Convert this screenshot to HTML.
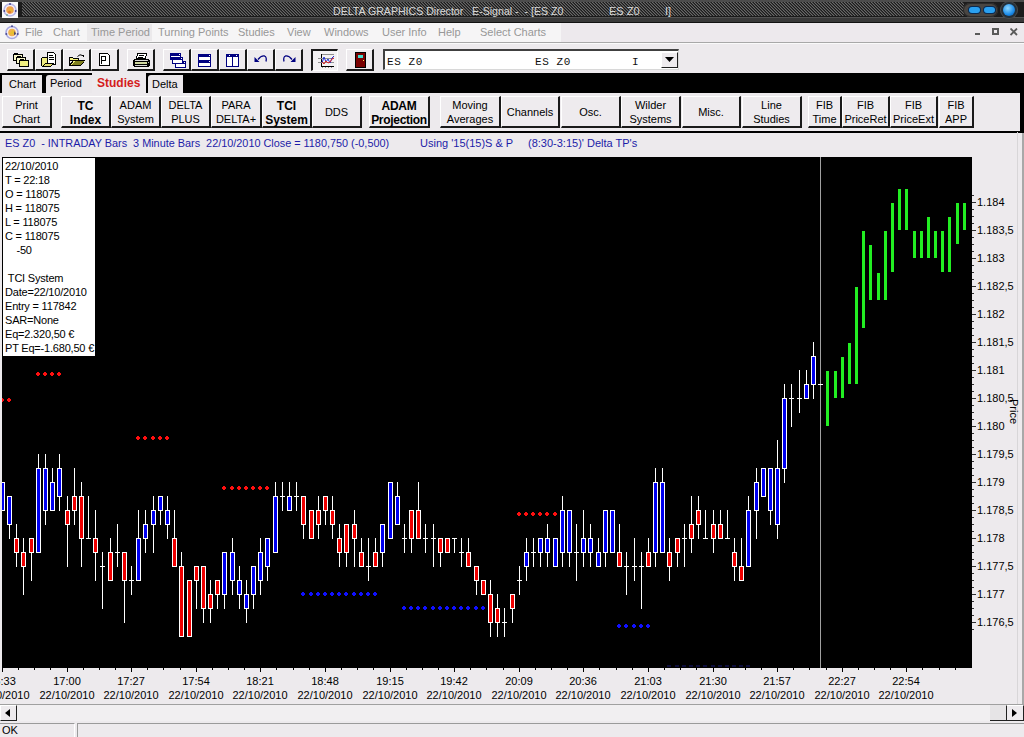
<!DOCTYPE html>
<html><head><meta charset="utf-8">
<style>
*{margin:0;padding:0;box-sizing:border-box}
html,body{width:1024px;height:737px;overflow:hidden;background:#edeaed;font-family:"Liberation Sans",sans-serif;font-size:11px;color:#000}
.a{position:absolute}
.t{position:absolute;white-space:nowrap;font-size:11px;line-height:14px}
.tc{width:80px;text-align:center}
.mi{position:absolute;top:25px;font-size:11px;line-height:14px;color:#989898;white-space:nowrap}
.tb{position:absolute;top:49px;height:22px;background:#eeebee;border-right:2px solid #1a1a1a;border-bottom:2px solid #1a1a1a;border-left:1px solid #fff;border-top:1px solid #fff}
.tab{position:absolute;top:75px;height:18px;background:#ebe8eb;font-size:11px;line-height:14px}
.btn{position:absolute;top:96px;height:32px;background:#eeebee;border-left:1px solid #fff;border-top:1px solid #fff;border-right:2px solid #1a1a1a;border-bottom:2px solid #1a1a1a;font-size:11px;line-height:14px;text-align:center;padding-top:1px}
.btn b{font-weight:bold;font-size:12px;line-height:14px;display:block;margin-top:1px}
.ib{position:absolute;left:3px;top:158px;width:92px;height:198px;background:#fff;padding:1px 0 0 2px;white-space:nowrap;overflow:hidden;letter-spacing:-0.2px;font-size:11px;line-height:14px}
</style></head><body>
<!-- TITLE BAR -->
<div class="a" style="left:0;top:0;width:1024px;height:23px;background:#1c1c1c"></div>
<div class="a" style="left:0;top:0;width:1024px;height:2px;background:#4c4c4c"></div>
<svg class="a" style="left:22px;top:2px" width="942" height="14" shape-rendering="crispEdges"><defs><pattern id="hp" width="3" height="3" patternUnits="userSpaceOnUse"><rect width="3" height="3" fill="#1c1c1c"/><rect x="0" y="0" width="1" height="1" fill="#686868"/><rect x="1" y="1" width="1" height="1" fill="#686868"/><rect x="2" y="2" width="1" height="1" fill="#686868"/><rect x="1" y="0" width="1" height="1" fill="#3c3c3c"/><rect x="2" y="1" width="1" height="1" fill="#3c3c3c"/><rect x="0" y="2" width="1" height="1" fill="#3c3c3c"/></pattern></defs><rect width="942" height="14" fill="url(#hp)"/></svg>
<div class="a" style="left:0;top:16px;width:1024px;height:1px;background:#1a1a1a"></div><div class="a" style="left:0;top:17px;width:1024px;height:5px;background:#393939;border-top:1px solid #525252"></div>
<div class="a" style="left:0;top:22px;width:1024px;height:1px;background:#111"></div>
<div class="a" style="left:2px;top:2px;width:16px;height:16px;background:#fafafa"></div>
<svg class="a" style="left:2px;top:2px" width="16" height="16"><circle cx="8" cy="8" r="6" fill="#f4ecf4" stroke="#b8b8e8" stroke-width="1.6"/><circle cx="8" cy="8" r="3.8" fill="#f0a050"/><path d="M5.5 10 L8.5 5.5 L11 9.5Z" fill="#e8b830"/><circle cx="7.5" cy="10" r="1.5" fill="#e07830"/><circle cx="8" cy="2" r="1" fill="#4a4a90"/><circle cx="2.3" cy="9" r="1" fill="#4a4a90"/><circle cx="13.7" cy="9" r="1" fill="#4a4a90"/><circle cx="5" cy="13" r="0.9" fill="#70a090"/></svg>
<div class="t" style="left:333px;top:4px;color:#d8d8d8;font-size:11px;transform:scaleX(0.963);transform-origin:0 0">DELTA GRAPHICS Director&nbsp;&nbsp; E-Signal -&nbsp; - [ES Z0</div>
<div class="t" style="left:609px;top:4px;color:#d8d8d8">ES Z0</div>
<div class="t" style="left:665px;top:4px;color:#d8d8d8">I]</div>
<div class="a" style="left:963px;top:3px;width:35px;height:14px;border-radius:7px;background:#4a4642;box-shadow:inset 0 0 0 1px #2a2a2a"></div>
<div class="a" style="left:969px;top:7px;width:11px;height:6px;border-radius:3px;background:#2aa0f0;box-shadow:0 0 0 1px #0a2a50"></div>
<div class="a" style="left:984px;top:7px;width:11px;height:6px;border-radius:3px;background:#2aa0f0;box-shadow:0 0 0 1px #0a2a50"></div>
<div class="a" style="left:1001px;top:2px;width:16px;height:16px;border-radius:8px;background:#24303a;box-shadow:0 0 0 1px #4a4a4a"></div>
<div class="a" style="left:1003px;top:4px;width:12px;height:12px;border-radius:6px;background:radial-gradient(circle at 40% 35%,#8fd8ff,#1a8ae8 60%,#0a4a90)"></div>

<!-- MENU BAR -->
<div class="a" style="left:0;top:23px;width:561px;height:20px;background:#f6f5f6"></div>
<div class="a" style="left:561px;top:23px;width:463px;height:20px;background:#ede9ed"></div>
<div class="a" style="left:87px;top:24px;width:65px;height:17px;background:#ebe9eb"></div>
<div class="a" style="left:0;top:42px;width:1024px;height:1px;background:#a8a8a8"></div>
<div class="a" style="left:0;top:43px;width:1024px;height:1px;background:#fafafa"></div>
<svg class="a" style="left:4px;top:24px" width="16" height="16"><circle cx="8" cy="8.5" r="6" fill="#f6f0f6" stroke="#a8a8e0" stroke-width="1.6"/><circle cx="8" cy="8.5" r="3.8" fill="#f0b050"/><path d="M5.5 10.5 L8.5 5.5 L11.5 10Z" fill="#e8c030"/><path d="M10.5 7 L12 10 L10 11z" fill="#303070"/><circle cx="8" cy="2.3" r="1" fill="#4a4a90"/><circle cx="2.3" cy="10" r="1" fill="#4a4a90"/><circle cx="13.7" cy="10" r="1" fill="#4a4a90"/></svg>
<div class="mi" style="left:25px">File</div>
<div class="mi" style="left:53px">Chart</div>
<div class="mi" style="left:91px">Time Period</div>
<div class="mi" style="left:158px">Turning Points</div>
<div class="mi" style="left:238px">Studies</div>
<div class="mi" style="left:287px">View</div>
<div class="mi" style="left:324px">Windows</div>
<div class="mi" style="left:382px">User Info</div>
<div class="mi" style="left:438px">Help</div>
<div class="mi" style="left:480px">Select Charts</div>
<div class="a" style="left:975px;top:33px;width:5px;height:2px;background:#5a5a5a"></div>
<div class="a" style="left:992px;top:28px;width:7px;height:7px;border:2px solid #5a5a5a"></div>
<svg class="a" style="left:1010px;top:28px" width="8" height="8"><path d="M0.5 0.5 L7 7 M7 0.5 L0.5 7" stroke="#5a5a5a" stroke-width="1.8"/></svg>

<!-- TOOLBAR -->
<div class="tb" style="left:7px;width:28px"></div>
<div class="tb" style="left:35px;width:28px"></div>
<div class="tb" style="left:63px;width:28px"></div>
<div class="tb" style="left:91px;width:28px"></div>
<div class="tb" style="left:127px;width:28px"></div>
<div class="tb" style="left:163px;width:28px"></div>
<div class="tb" style="left:191px;width:28px"></div>
<div class="tb" style="left:219px;width:28px"></div>
<div class="tb" style="left:247px;width:28px"></div>
<div class="tb" style="left:275px;width:28px"></div>
<div class="tb" style="left:311px;width:27px;border-left:2px solid #1a1a1a;border-top:2px solid #1a1a1a;border-right:1px solid #fff;border-bottom:1px solid #fff;background:#f4f2f4"></div>
<div class="tb" style="left:346px;width:28px"></div>
<!-- combo -->
<div class="a" style="left:383px;top:49px;width:296px;height:21px;background:#fff;border-top:2px solid #404040;border-left:2px solid #404040;border-bottom:1px solid #d8d8d8;border-right:1px solid #d8d8d8"></div>
<div class="t" style="left:387px;top:55px;font-family:'Liberation Mono',monospace;font-size:11px;letter-spacing:0.6px;line-height:14px;color:#101010">ES Z0</div>
<div class="t" style="left:535px;top:55px;font-family:'Liberation Mono',monospace;font-size:11px;letter-spacing:0.6px;line-height:14px;color:#101010">ES Z0</div>
<div class="t" style="left:632px;top:55px;font-family:'Liberation Mono',monospace;font-size:11px;letter-spacing:0.6px;line-height:14px;color:#101010">I</div>
<div class="a" style="left:661px;top:52px;width:17px;height:16px;background:#eeebee;border-left:1px solid #fff;border-top:1px solid #fff;border-right:1px solid #202020;border-bottom:1px solid #202020"></div>
<svg class="a" style="left:665px;top:57px" width="9" height="6"><path d="M0 0 H9 L4.5 5Z" fill="#000"/></svg>
<!--ICONS-->
<svg class="a" style="left:0;top:0" width="400" height="75" shape-rendering="crispEdges">
<!-- icon1 stacked folders -->
<rect x="13" y="54" width="10" height="7" fill="#000"/><rect x="14" y="53" width="4" height="1" fill="#000"/><rect x="14" y="55" width="8" height="5" fill="#f8f6c8"/>
<rect x="16" y="57" width="10" height="7" fill="#000"/><rect x="17" y="56" width="4" height="1" fill="#000"/><rect x="17" y="58" width="8" height="5" fill="#f8f6c8"/>
<rect x="19" y="60" width="10" height="7" fill="#000"/><rect x="20" y="59" width="4" height="1" fill="#000"/><rect x="20" y="61" width="8" height="5" fill="#f0ee80"/>
<!-- icon2 folder + doc -->
<path d="M47.5 52.5 h6 l2 2 v10 h-8z" fill="#fff" stroke="#000"/>
<rect x="49" y="55" width="4" height="1" fill="#000"/><rect x="49" y="57" width="5" height="1" fill="#000"/><rect x="49" y="59" width="5" height="1" fill="#000"/>
<path d="M41.5 58.5 l1 -1 h5 v9 h-5 l-1 -1z" fill="#f0ec80" stroke="#000"/>
<path d="M42.5 66.5 l3 -3 h8 l-3 3z" fill="#e8e070" stroke="#000"/>
<rect x="42" y="66" width="9" height="1" fill="#000"/>
<!-- icon3 open folder -->
<path d="M69.5 57.5 h3 l1 1 h5 v2 h-9z" fill="#f4f080" stroke="#000"/>
<path d="M69.5 58.5 v7 h11 l4 -5 h-11 l-4 5" fill="#f4f080" stroke="#000"/>
<path d="M71 65 l4 -4 h9 l-4 4z" fill="#808020"/>
<rect x="69" y="65" width="12" height="1" fill="#000"/>
<path d="M81 55 h3 v2z" fill="#000"/>
<path d="M77.5 56.5 q2.5 -3 5 -1" fill="none" stroke="#000" stroke-width="1" shape-rendering="auto"/>
<!-- icon4 doc P -->
<path d="M99.5 53.5 h8 l2 2 v10 h-10z" fill="#fff" stroke="#000"/>
<path d="M101 56 h5 v5 h-4 v3 h-1z M102 57 v3 h3 v-3z" fill="#000" fill-rule="evenodd"/>
<!-- printer -->
<path d="M137.5 53.5 h9 l-1 5 h-9z" fill="#fff" stroke="#000"/>
<rect x="139" y="55" width="5" height="1" fill="#000"/><rect x="138" y="57" width="5" height="1" fill="#000"/>
<rect x="134" y="59" width="15" height="8" fill="#000"/>
<rect x="133" y="60" width="17" height="6" fill="#000"/>
<rect x="135" y="60" width="12" height="1" fill="#d8d8d8"/>
<rect x="135" y="62" width="12" height="2" fill="#d0d8a0"/>
<rect x="135" y="65" width="12" height="1" fill="#d8d8d8"/>
<rect x="147" y="60" width="1" height="1" fill="#c0c0c0"/><rect x="148" y="62" width="1" height="1" fill="#c0c0c0"/>
<!-- cascade -->
<g fill="#000080">
<rect x="170" y="53" width="11" height="7"/>
<rect x="172" y="57" width="11" height="7"/>
<rect x="175" y="61" width="11" height="7"/>
</g>
<rect x="171" y="56" width="9" height="1" fill="#fff"/>
<rect x="173" y="60" width="9" height="3" fill="#fff"/>
<rect x="176" y="64" width="9" height="3" fill="#fff"/>
<rect x="179" y="54" width="1" height="1" fill="#fff"/><rect x="181" y="58" width="1" height="1" fill="#fff"/><rect x="184" y="62" width="1" height="1" fill="#fff"/>
<!-- tile horizontal -->
<rect x="198" y="54" width="13" height="13" fill="#000080"/>
<rect x="199" y="57" width="11" height="3" fill="#fff"/>
<rect x="199" y="63" width="11" height="3" fill="#fff"/>
<rect x="209" y="55" width="1" height="1" fill="#fff"/><rect x="209" y="61" width="1" height="1" fill="#fff"/>
<!-- tile vertical -->
<rect x="226" y="54" width="13" height="13" fill="#000080"/>
<rect x="227" y="57" width="5" height="9" fill="#fff"/>
<rect x="233" y="57" width="5" height="9" fill="#fff"/>
<rect x="229" y="55" width="1" height="1" fill="#fff"/><rect x="236" y="55" width="1" height="1" fill="#fff"/>
</svg>
<svg class="a" style="left:0;top:0" width="400" height="75">
<!-- undo -->
<path d="M258 59.5 q3 -4 6.5 -3.5 q2.5 1 1.5 5.5" fill="none" stroke="#000080" stroke-width="1.3"/>
<path d="M254.5 57 v5 h5z" fill="#000080"/>
<!-- redo -->
<path d="M292 59.5 q-3 -4 -6.5 -3.5 q-2.5 1 -1.5 5.5" fill="none" stroke="#000080" stroke-width="1.3"/>
<path d="M295.5 57 v5 h-5z" fill="#000080"/>
<!-- chart icon -->
<g shape-rendering="crispEdges">
<rect x="321" y="54" width="1" height="13" fill="#000"/>
<rect x="321" y="66" width="13" height="1" fill="#000"/>
<rect x="322" y="54" width="12" height="1" fill="#909090"/>
<rect x="318" y="58" width="16" height="1" fill="#909090"/>
<rect x="318" y="62" width="16" height="1" fill="#909090"/>
<rect x="322" y="67" width="1" height="1" fill="#909090"/><rect x="325" y="67" width="1" height="1" fill="#909090"/><rect x="328" y="67" width="1" height="1" fill="#909090"/><rect x="331" y="67" width="1" height="1" fill="#909090"/>
</g>
<path d="M322 63 l2 -6 l2 5 l2 -3 l2 4 l2 -5 l2 -2" fill="none" stroke="#2030d0" stroke-width="1"/>
<path d="M322 62 l2 2 l2 -3 l2 2 l2 -1 l2 -3 l2 -1" fill="none" stroke="#e02020" stroke-width="1"/>
<!-- door -->
<g shape-rendering="crispEdges">
<rect x="355" y="52" width="11" height="16" fill="#000"/>
<rect x="356" y="53" width="9" height="14" fill="#7a0000"/>
<rect x="358" y="55" width="5" height="3" fill="#40e0d0"/>
<rect x="363" y="60" width="1" height="1" fill="#ffe060"/>
</g>
</svg>

<!-- TABS -->
<div class="a" style="left:0;top:73px;width:1024px;height:20px;background:#000"></div>
<div class="tab" style="left:2px;width:40px"><span class="a" style="left:7px;top:2px">Chart</span></div>
<div class="tab" style="left:46px;width:46px;border-top-left-radius:3px"><span class="a" style="left:4px;top:1px">Period</span></div>
<div class="tab" style="left:92px;top:73px;height:22px;width:54px;background:#edeaed"><span class="a" style="left:5px;top:3px;color:#d41c1c;font-weight:bold;font-size:12px">Studies</span></div>
<div class="tab" style="left:148px;width:35px;border-top-left-radius:3px"><span class="a" style="left:4px;top:2px">Delta</span></div>

<!-- BUTTON PANEL -->
<div class="a" style="left:0;top:93px;width:1020px;height:38px;background:#edeaed"></div>
<div class="a" style="left:1020px;top:93px;width:4px;height:39px;background:#000"></div>
<div class="a" style="left:0;top:131px;width:1024px;height:2px;background:#000"></div>
<div class="btn" style="left:2px;width:50px">Print<br>Chart</div>
<div class="btn" style="left:61px;width:50px"><b>TC<br>Index</b></div>
<div class="btn" style="left:111px;width:50px">ADAM<br>System</div>
<div class="btn" style="left:161px;width:50px">DELTA<br>PLUS</div>
<div class="btn" style="left:211px;width:51px">PARA<br>DELTA+</div>
<div class="btn" style="left:262px;width:50px"><b>TCI<br>System</b></div>
<div class="btn" style="left:312px;width:50px;line-height:29px">DDS</div>
<div class="btn" style="left:369px;width:61px"><b style="letter-spacing:-0.3px">ADAM<br>Projection</b></div>
<div class="btn" style="left:440px;width:61px">Moving<br>Averages</div>
<div class="btn" style="left:501px;width:59px;line-height:29px">Channels</div>
<div class="btn" style="left:561px;width:60px;line-height:29px">Osc.</div>
<div class="btn" style="left:621px;width:60px">Wilder<br>Systems</div>
<div class="btn" style="left:682px;width:59px;line-height:29px">Misc.</div>
<div class="btn" style="left:742px;width:60px">Line<br>Studies</div>
<div class="btn" style="left:808px;width:34px">FIB<br>Time</div>
<div class="btn" style="left:842px;width:48px">FIB<br>PriceRet</div>
<div class="btn" style="left:890px;width:48px">FIB<br>PriceExt</div>
<div class="btn" style="left:939px;width:35px">FIB<br>APP</div>

<!-- INFO LINE -->
<div class="t" style="left:5px;top:136px;color:#1c1ca8;transform:scaleX(0.987);transform-origin:0 0">ES Z0&nbsp; - INTRADAY Bars&nbsp; 3 Minute Bars&nbsp; 22/10/2010 Close = 1180,750 (-0,500)</div>
<div class="t" style="left:420px;top:136px;color:#1c1ca8">Using '15(15)S &amp; P</div>
<div class="t" style="left:528px;top:136px;color:#1c1ca8">(8:30-3:15)' Delta TP's</div>

<!-- CHART + AXES SVG -->
<div class="a" style="left:2px;top:157px;width:970px;height:511px;background:#000"></div>
<div class="a" style="left:0;top:704px;width:1024px;height:1px;background:#a0a0a0"></div>
<div class="a" style="left:1017px;top:132px;width:1px;height:572px;background:#d8d6d8"></div>
<div class="a" style="left:1022px;top:133px;width:2px;height:571px;background:#a8a8a8"></div>
<svg class="a" style="left:0;top:0" width="1024" height="737" shape-rendering="crispEdges">
<rect x="820" y="157" width="1" height="511" fill="#a0a0a0"/>
<rect x="2" y="482" width="1" height="29" fill="#fff"/>
<rect x="0" y="482" width="5" height="29" fill="#fff"/>
<rect x="1" y="483" width="3" height="27" fill="#0000f0"/>
<rect x="9" y="496" width="1" height="43" fill="#fff"/>
<rect x="7" y="496" width="5" height="29" fill="#fff"/>
<rect x="8" y="497" width="3" height="27" fill="#0000f0"/>
<rect x="16" y="524" width="1" height="43" fill="#fff"/>
<rect x="14" y="538" width="5" height="15" fill="#fff"/>
<rect x="15" y="539" width="3" height="13" fill="#f00000"/>
<rect x="23" y="538" width="1" height="57" fill="#fff"/>
<rect x="21" y="552" width="5" height="15" fill="#fff"/>
<rect x="22" y="553" width="3" height="13" fill="#f00000"/>
<rect x="31" y="538" width="1" height="43" fill="#fff"/>
<rect x="29" y="538" width="5" height="15" fill="#fff"/>
<rect x="30" y="539" width="3" height="13" fill="#f00000"/>
<rect x="38" y="454" width="1" height="99" fill="#fff"/>
<rect x="36" y="468" width="5" height="85" fill="#fff"/>
<rect x="37" y="469" width="3" height="83" fill="#0000f0"/>
<rect x="45" y="454" width="1" height="71" fill="#fff"/>
<rect x="43" y="468" width="5" height="43" fill="#fff"/>
<rect x="44" y="469" width="3" height="41" fill="#0000f0"/>
<rect x="52" y="468" width="1" height="43" fill="#fff"/>
<rect x="50" y="482" width="5" height="29" fill="#fff"/>
<rect x="51" y="483" width="3" height="27" fill="#0000f0"/>
<rect x="59" y="454" width="1" height="57" fill="#fff"/>
<rect x="57" y="468" width="5" height="29" fill="#fff"/>
<rect x="58" y="469" width="3" height="27" fill="#0000f0"/>
<rect x="67" y="496" width="1" height="71" fill="#fff"/>
<rect x="65" y="510" width="5" height="15" fill="#fff"/>
<rect x="66" y="511" width="3" height="13" fill="#f00000"/>
<rect x="74" y="468" width="1" height="57" fill="#fff"/>
<rect x="72" y="496" width="5" height="15" fill="#fff"/>
<rect x="73" y="497" width="3" height="13" fill="#f00000"/>
<rect x="81" y="482" width="1" height="85" fill="#fff"/>
<rect x="79" y="496" width="5" height="43" fill="#fff"/>
<rect x="80" y="497" width="3" height="41" fill="#f00000"/>
<rect x="88" y="496" width="1" height="43" fill="#fff"/>
<rect x="86" y="538" width="5" height="1" fill="#fff"/>
<rect x="95" y="510" width="1" height="71" fill="#fff"/>
<rect x="93" y="538" width="5" height="15" fill="#fff"/>
<rect x="94" y="539" width="3" height="13" fill="#f00000"/>
<rect x="102" y="552" width="1" height="57" fill="#fff"/>
<rect x="100" y="566" width="5" height="1" fill="#fff"/>
<rect x="110" y="538" width="1" height="43" fill="#fff"/>
<rect x="108" y="552" width="5" height="29" fill="#fff"/>
<rect x="109" y="553" width="3" height="27" fill="#f00000"/>
<rect x="117" y="524" width="1" height="43" fill="#fff"/>
<rect x="115" y="552" width="5" height="1" fill="#fff"/>
<rect x="124" y="552" width="1" height="71" fill="#fff"/>
<rect x="122" y="552" width="5" height="29" fill="#fff"/>
<rect x="123" y="553" width="3" height="27" fill="#f00000"/>
<rect x="131" y="566" width="1" height="29" fill="#fff"/>
<rect x="129" y="580" width="5" height="1" fill="#fff"/>
<rect x="138" y="510" width="1" height="71" fill="#fff"/>
<rect x="136" y="538" width="5" height="43" fill="#fff"/>
<rect x="137" y="539" width="3" height="41" fill="#0000f0"/>
<rect x="145" y="510" width="1" height="43" fill="#fff"/>
<rect x="143" y="524" width="5" height="15" fill="#fff"/>
<rect x="144" y="525" width="3" height="13" fill="#0000f0"/>
<rect x="153" y="496" width="1" height="57" fill="#fff"/>
<rect x="151" y="510" width="5" height="15" fill="#fff"/>
<rect x="152" y="511" width="3" height="13" fill="#0000f0"/>
<rect x="160" y="496" width="1" height="29" fill="#fff"/>
<rect x="158" y="496" width="5" height="15" fill="#fff"/>
<rect x="159" y="497" width="3" height="13" fill="#0000f0"/>
<rect x="167" y="496" width="1" height="43" fill="#fff"/>
<rect x="165" y="510" width="5" height="15" fill="#fff"/>
<rect x="166" y="511" width="3" height="13" fill="#0000f0"/>
<rect x="174" y="510" width="1" height="57" fill="#fff"/>
<rect x="172" y="538" width="5" height="29" fill="#fff"/>
<rect x="173" y="539" width="3" height="27" fill="#f00000"/>
<rect x="181" y="552" width="1" height="85" fill="#fff"/>
<rect x="179" y="566" width="5" height="71" fill="#fff"/>
<rect x="180" y="567" width="3" height="69" fill="#f00000"/>
<rect x="189" y="580" width="1" height="57" fill="#fff"/>
<rect x="187" y="580" width="5" height="57" fill="#fff"/>
<rect x="188" y="581" width="3" height="55" fill="#f00000"/>
<rect x="196" y="566" width="1" height="43" fill="#fff"/>
<rect x="194" y="566" width="5" height="15" fill="#fff"/>
<rect x="195" y="567" width="3" height="13" fill="#f00000"/>
<rect x="203" y="566" width="1" height="57" fill="#fff"/>
<rect x="201" y="566" width="5" height="43" fill="#fff"/>
<rect x="202" y="567" width="3" height="41" fill="#f00000"/>
<rect x="210" y="580" width="1" height="43" fill="#fff"/>
<rect x="208" y="594" width="5" height="15" fill="#fff"/>
<rect x="209" y="595" width="3" height="13" fill="#f00000"/>
<rect x="217" y="580" width="1" height="29" fill="#fff"/>
<rect x="215" y="580" width="5" height="15" fill="#fff"/>
<rect x="216" y="581" width="3" height="13" fill="#f00000"/>
<rect x="224" y="552" width="1" height="57" fill="#fff"/>
<rect x="222" y="552" width="5" height="43" fill="#fff"/>
<rect x="223" y="553" width="3" height="41" fill="#0000f0"/>
<rect x="232" y="538" width="1" height="57" fill="#fff"/>
<rect x="230" y="552" width="5" height="29" fill="#fff"/>
<rect x="231" y="553" width="3" height="27" fill="#0000f0"/>
<rect x="239" y="566" width="1" height="43" fill="#fff"/>
<rect x="237" y="580" width="5" height="15" fill="#fff"/>
<rect x="238" y="581" width="3" height="13" fill="#0000f0"/>
<rect x="246" y="580" width="1" height="43" fill="#fff"/>
<rect x="244" y="594" width="5" height="15" fill="#fff"/>
<rect x="245" y="595" width="3" height="13" fill="#0000f0"/>
<rect x="253" y="566" width="1" height="43" fill="#fff"/>
<rect x="251" y="566" width="5" height="29" fill="#fff"/>
<rect x="252" y="567" width="3" height="27" fill="#0000f0"/>
<rect x="260" y="538" width="1" height="57" fill="#fff"/>
<rect x="258" y="552" width="5" height="29" fill="#fff"/>
<rect x="259" y="553" width="3" height="27" fill="#0000f0"/>
<rect x="267" y="538" width="1" height="43" fill="#fff"/>
<rect x="265" y="538" width="5" height="29" fill="#fff"/>
<rect x="266" y="539" width="3" height="27" fill="#0000f0"/>
<rect x="275" y="482" width="1" height="71" fill="#fff"/>
<rect x="273" y="496" width="5" height="57" fill="#fff"/>
<rect x="274" y="497" width="3" height="55" fill="#0000f0"/>
<rect x="282" y="482" width="1" height="29" fill="#fff"/>
<rect x="280" y="496" width="5" height="1" fill="#fff"/>
<rect x="289" y="482" width="1" height="29" fill="#fff"/>
<rect x="287" y="496" width="5" height="15" fill="#fff"/>
<rect x="288" y="497" width="3" height="13" fill="#0000f0"/>
<rect x="296" y="482" width="1" height="29" fill="#fff"/>
<rect x="294" y="496" width="5" height="1" fill="#fff"/>
<rect x="303" y="496" width="1" height="43" fill="#fff"/>
<rect x="301" y="496" width="5" height="29" fill="#fff"/>
<rect x="302" y="497" width="3" height="27" fill="#f00000"/>
<rect x="311" y="510" width="1" height="29" fill="#fff"/>
<rect x="309" y="510" width="5" height="29" fill="#fff"/>
<rect x="310" y="511" width="3" height="27" fill="#f00000"/>
<rect x="318" y="496" width="1" height="43" fill="#fff"/>
<rect x="316" y="510" width="5" height="15" fill="#fff"/>
<rect x="317" y="511" width="3" height="13" fill="#f00000"/>
<rect x="325" y="496" width="1" height="29" fill="#fff"/>
<rect x="323" y="496" width="5" height="15" fill="#fff"/>
<rect x="324" y="497" width="3" height="13" fill="#f00000"/>
<rect x="332" y="496" width="1" height="43" fill="#fff"/>
<rect x="330" y="510" width="5" height="15" fill="#fff"/>
<rect x="331" y="511" width="3" height="13" fill="#f00000"/>
<rect x="339" y="524" width="1" height="43" fill="#fff"/>
<rect x="337" y="538" width="5" height="15" fill="#fff"/>
<rect x="338" y="539" width="3" height="13" fill="#f00000"/>
<rect x="346" y="524" width="1" height="43" fill="#fff"/>
<rect x="344" y="524" width="5" height="29" fill="#fff"/>
<rect x="345" y="525" width="3" height="27" fill="#f00000"/>
<rect x="354" y="510" width="1" height="57" fill="#fff"/>
<rect x="352" y="524" width="5" height="15" fill="#fff"/>
<rect x="353" y="525" width="3" height="13" fill="#f00000"/>
<rect x="361" y="538" width="1" height="29" fill="#fff"/>
<rect x="359" y="552" width="5" height="15" fill="#fff"/>
<rect x="360" y="553" width="3" height="13" fill="#f00000"/>
<rect x="368" y="538" width="1" height="43" fill="#fff"/>
<rect x="366" y="566" width="5" height="1" fill="#fff"/>
<rect x="375" y="538" width="1" height="29" fill="#fff"/>
<rect x="373" y="552" width="5" height="15" fill="#fff"/>
<rect x="374" y="553" width="3" height="13" fill="#f00000"/>
<rect x="382" y="524" width="1" height="43" fill="#fff"/>
<rect x="380" y="524" width="5" height="29" fill="#fff"/>
<rect x="381" y="525" width="3" height="27" fill="#0000f0"/>
<rect x="390" y="482" width="1" height="57" fill="#fff"/>
<rect x="388" y="482" width="5" height="57" fill="#fff"/>
<rect x="389" y="483" width="3" height="55" fill="#0000f0"/>
<rect x="397" y="482" width="1" height="43" fill="#fff"/>
<rect x="395" y="496" width="5" height="29" fill="#fff"/>
<rect x="396" y="497" width="3" height="27" fill="#0000f0"/>
<rect x="404" y="524" width="1" height="29" fill="#fff"/>
<rect x="402" y="538" width="5" height="1" fill="#fff"/>
<rect x="411" y="510" width="1" height="43" fill="#fff"/>
<rect x="409" y="510" width="5" height="29" fill="#fff"/>
<rect x="410" y="511" width="3" height="27" fill="#f00000"/>
<rect x="418" y="482" width="1" height="57" fill="#fff"/>
<rect x="416" y="510" width="5" height="29" fill="#fff"/>
<rect x="417" y="511" width="3" height="27" fill="#f00000"/>
<rect x="425" y="524" width="1" height="29" fill="#fff"/>
<rect x="423" y="538" width="5" height="1" fill="#fff"/>
<rect x="433" y="524" width="1" height="43" fill="#fff"/>
<rect x="431" y="538" width="5" height="1" fill="#fff"/>
<rect x="440" y="538" width="1" height="29" fill="#fff"/>
<rect x="438" y="538" width="5" height="15" fill="#fff"/>
<rect x="439" y="539" width="3" height="13" fill="#f00000"/>
<rect x="447" y="538" width="1" height="15" fill="#fff"/>
<rect x="445" y="538" width="5" height="15" fill="#fff"/>
<rect x="446" y="539" width="3" height="13" fill="#f00000"/>
<rect x="454" y="538" width="1" height="15" fill="#fff"/>
<rect x="452" y="538" width="5" height="1" fill="#fff"/>
<rect x="461" y="538" width="1" height="29" fill="#fff"/>
<rect x="459" y="552" width="5" height="1" fill="#fff"/>
<rect x="468" y="538" width="1" height="29" fill="#fff"/>
<rect x="466" y="552" width="5" height="15" fill="#fff"/>
<rect x="467" y="553" width="3" height="13" fill="#f00000"/>
<rect x="476" y="566" width="1" height="29" fill="#fff"/>
<rect x="474" y="566" width="5" height="15" fill="#fff"/>
<rect x="475" y="567" width="3" height="13" fill="#f00000"/>
<rect x="483" y="580" width="1" height="15" fill="#fff"/>
<rect x="481" y="580" width="5" height="15" fill="#fff"/>
<rect x="482" y="581" width="3" height="13" fill="#f00000"/>
<rect x="490" y="580" width="1" height="57" fill="#fff"/>
<rect x="488" y="594" width="5" height="29" fill="#fff"/>
<rect x="489" y="595" width="3" height="27" fill="#f00000"/>
<rect x="497" y="594" width="1" height="43" fill="#fff"/>
<rect x="495" y="608" width="5" height="15" fill="#fff"/>
<rect x="496" y="609" width="3" height="13" fill="#f00000"/>
<rect x="504" y="608" width="1" height="29" fill="#fff"/>
<rect x="502" y="622" width="5" height="1" fill="#fff"/>
<rect x="512" y="594" width="1" height="29" fill="#fff"/>
<rect x="510" y="594" width="5" height="15" fill="#fff"/>
<rect x="511" y="595" width="3" height="13" fill="#f00000"/>
<rect x="519" y="566" width="1" height="29" fill="#fff"/>
<rect x="517" y="580" width="5" height="1" fill="#fff"/>
<rect x="526" y="538" width="1" height="43" fill="#fff"/>
<rect x="524" y="552" width="5" height="15" fill="#fff"/>
<rect x="525" y="553" width="3" height="13" fill="#0000f0"/>
<rect x="533" y="538" width="1" height="29" fill="#fff"/>
<rect x="531" y="552" width="5" height="1" fill="#fff"/>
<rect x="540" y="538" width="1" height="29" fill="#fff"/>
<rect x="538" y="538" width="5" height="15" fill="#fff"/>
<rect x="539" y="539" width="3" height="13" fill="#0000f0"/>
<rect x="547" y="524" width="1" height="43" fill="#fff"/>
<rect x="545" y="538" width="5" height="15" fill="#fff"/>
<rect x="546" y="539" width="3" height="13" fill="#0000f0"/>
<rect x="555" y="538" width="1" height="29" fill="#fff"/>
<rect x="553" y="538" width="5" height="29" fill="#fff"/>
<rect x="554" y="539" width="3" height="27" fill="#0000f0"/>
<rect x="562" y="496" width="1" height="71" fill="#fff"/>
<rect x="560" y="510" width="5" height="43" fill="#fff"/>
<rect x="561" y="511" width="3" height="41" fill="#0000f0"/>
<rect x="569" y="510" width="1" height="57" fill="#fff"/>
<rect x="567" y="510" width="5" height="43" fill="#fff"/>
<rect x="568" y="511" width="3" height="41" fill="#0000f0"/>
<rect x="576" y="524" width="1" height="57" fill="#fff"/>
<rect x="574" y="552" width="5" height="1" fill="#fff"/>
<rect x="583" y="510" width="1" height="57" fill="#fff"/>
<rect x="581" y="538" width="5" height="15" fill="#fff"/>
<rect x="582" y="539" width="3" height="13" fill="#0000f0"/>
<rect x="590" y="524" width="1" height="43" fill="#fff"/>
<rect x="588" y="538" width="5" height="15" fill="#fff"/>
<rect x="589" y="539" width="3" height="13" fill="#0000f0"/>
<rect x="598" y="538" width="1" height="29" fill="#fff"/>
<rect x="596" y="552" width="5" height="15" fill="#fff"/>
<rect x="597" y="553" width="3" height="13" fill="#0000f0"/>
<rect x="605" y="510" width="1" height="57" fill="#fff"/>
<rect x="603" y="510" width="5" height="43" fill="#fff"/>
<rect x="604" y="511" width="3" height="41" fill="#0000f0"/>
<rect x="612" y="510" width="1" height="43" fill="#fff"/>
<rect x="610" y="510" width="5" height="43" fill="#fff"/>
<rect x="611" y="511" width="3" height="41" fill="#0000f0"/>
<rect x="619" y="524" width="1" height="43" fill="#fff"/>
<rect x="617" y="552" width="5" height="15" fill="#fff"/>
<rect x="618" y="553" width="3" height="13" fill="#f00000"/>
<rect x="626" y="552" width="1" height="43" fill="#fff"/>
<rect x="624" y="566" width="5" height="1" fill="#fff"/>
<rect x="634" y="538" width="1" height="43" fill="#fff"/>
<rect x="632" y="566" width="5" height="1" fill="#fff"/>
<rect x="641" y="552" width="1" height="57" fill="#fff"/>
<rect x="639" y="566" width="5" height="1" fill="#fff"/>
<rect x="648" y="538" width="1" height="29" fill="#fff"/>
<rect x="646" y="552" width="5" height="15" fill="#fff"/>
<rect x="647" y="553" width="3" height="13" fill="#f00000"/>
<rect x="655" y="468" width="1" height="99" fill="#fff"/>
<rect x="653" y="482" width="5" height="71" fill="#fff"/>
<rect x="654" y="483" width="3" height="69" fill="#0000f0"/>
<rect x="662" y="468" width="1" height="85" fill="#fff"/>
<rect x="660" y="482" width="5" height="71" fill="#fff"/>
<rect x="661" y="483" width="3" height="69" fill="#0000f0"/>
<rect x="669" y="538" width="1" height="43" fill="#fff"/>
<rect x="667" y="552" width="5" height="15" fill="#fff"/>
<rect x="668" y="553" width="3" height="13" fill="#f00000"/>
<rect x="677" y="538" width="1" height="29" fill="#fff"/>
<rect x="675" y="538" width="5" height="15" fill="#fff"/>
<rect x="676" y="539" width="3" height="13" fill="#f00000"/>
<rect x="684" y="524" width="1" height="43" fill="#fff"/>
<rect x="682" y="538" width="5" height="1" fill="#fff"/>
<rect x="691" y="496" width="1" height="57" fill="#fff"/>
<rect x="689" y="524" width="5" height="15" fill="#fff"/>
<rect x="690" y="525" width="3" height="13" fill="#f00000"/>
<rect x="698" y="496" width="1" height="43" fill="#fff"/>
<rect x="696" y="510" width="5" height="15" fill="#fff"/>
<rect x="697" y="511" width="3" height="13" fill="#f00000"/>
<rect x="705" y="510" width="1" height="29" fill="#fff"/>
<rect x="703" y="538" width="5" height="1" fill="#fff"/>
<rect x="713" y="510" width="1" height="43" fill="#fff"/>
<rect x="711" y="524" width="5" height="15" fill="#fff"/>
<rect x="712" y="525" width="3" height="13" fill="#f00000"/>
<rect x="720" y="510" width="1" height="29" fill="#fff"/>
<rect x="718" y="524" width="5" height="15" fill="#fff"/>
<rect x="719" y="525" width="3" height="13" fill="#f00000"/>
<rect x="727" y="510" width="1" height="29" fill="#fff"/>
<rect x="725" y="538" width="5" height="1" fill="#fff"/>
<rect x="734" y="538" width="1" height="43" fill="#fff"/>
<rect x="732" y="552" width="5" height="15" fill="#fff"/>
<rect x="733" y="553" width="3" height="13" fill="#f00000"/>
<rect x="741" y="538" width="1" height="43" fill="#fff"/>
<rect x="739" y="566" width="5" height="15" fill="#fff"/>
<rect x="740" y="567" width="3" height="13" fill="#f00000"/>
<rect x="748" y="496" width="1" height="71" fill="#fff"/>
<rect x="746" y="510" width="5" height="57" fill="#fff"/>
<rect x="747" y="511" width="3" height="55" fill="#0000f0"/>
<rect x="756" y="468" width="1" height="71" fill="#fff"/>
<rect x="754" y="482" width="5" height="29" fill="#fff"/>
<rect x="755" y="483" width="3" height="27" fill="#0000f0"/>
<rect x="763" y="468" width="1" height="29" fill="#fff"/>
<rect x="761" y="468" width="5" height="29" fill="#fff"/>
<rect x="762" y="469" width="3" height="27" fill="#0000f0"/>
<rect x="770" y="468" width="1" height="57" fill="#fff"/>
<rect x="768" y="468" width="5" height="43" fill="#fff"/>
<rect x="769" y="469" width="3" height="41" fill="#0000f0"/>
<rect x="777" y="440" width="1" height="99" fill="#fff"/>
<rect x="775" y="468" width="5" height="57" fill="#fff"/>
<rect x="776" y="469" width="3" height="55" fill="#0000f0"/>
<rect x="784" y="384" width="1" height="99" fill="#fff"/>
<rect x="782" y="398" width="5" height="71" fill="#fff"/>
<rect x="783" y="399" width="3" height="69" fill="#0000f0"/>
<rect x="791" y="384" width="1" height="43" fill="#fff"/>
<rect x="789" y="398" width="5" height="1" fill="#fff"/>
<rect x="799" y="370" width="1" height="43" fill="#fff"/>
<rect x="797" y="398" width="5" height="1" fill="#fff"/>
<rect x="806" y="370" width="1" height="29" fill="#fff"/>
<rect x="804" y="384" width="5" height="15" fill="#fff"/>
<rect x="805" y="385" width="3" height="13" fill="#0000f0"/>
<rect x="813" y="342" width="1" height="57" fill="#fff"/>
<rect x="811" y="356" width="5" height="29" fill="#fff"/>
<rect x="812" y="357" width="3" height="27" fill="#0000f0"/>
<rect x="818" y="384" width="5" height="1" fill="#fff"/>
<rect x="826" y="371" width="3" height="55" fill="#22ee22"/>
<rect x="834" y="371" width="3" height="27" fill="#22ee22"/>
<rect x="841" y="357" width="3" height="41" fill="#22ee22"/>
<rect x="848" y="343" width="3" height="41" fill="#22ee22"/>
<rect x="855" y="287" width="3" height="97" fill="#22ee22"/>
<rect x="862" y="231" width="3" height="97" fill="#22ee22"/>
<rect x="869" y="245" width="3" height="55" fill="#22ee22"/>
<rect x="877" y="273" width="3" height="27" fill="#22ee22"/>
<rect x="884" y="231" width="3" height="69" fill="#22ee22"/>
<rect x="891" y="203" width="3" height="69" fill="#22ee22"/>
<rect x="898" y="189" width="3" height="41" fill="#22ee22"/>
<rect x="905" y="189" width="3" height="41" fill="#22ee22"/>
<rect x="913" y="231" width="3" height="27" fill="#22ee22"/>
<rect x="920" y="231" width="3" height="27" fill="#22ee22"/>
<rect x="927" y="217" width="3" height="41" fill="#22ee22"/>
<rect x="934" y="231" width="3" height="27" fill="#22ee22"/>
<rect x="941" y="231" width="3" height="41" fill="#22ee22"/>
<rect x="948" y="217" width="3" height="55" fill="#22ee22"/>
<rect x="956" y="203" width="3" height="41" fill="#22ee22"/>
<rect x="963" y="203" width="3" height="27" fill="#22ee22"/>
<rect x="36" y="373" width="4" height="2" fill="#ff1010"/><rect x="37" y="372" width="2" height="4" fill="#ff1010"/>
<rect x="43" y="373" width="4" height="2" fill="#ff1010"/><rect x="44" y="372" width="2" height="4" fill="#ff1010"/>
<rect x="50" y="373" width="4" height="2" fill="#ff1010"/><rect x="51" y="372" width="2" height="4" fill="#ff1010"/>
<rect x="57" y="373" width="4" height="2" fill="#ff1010"/><rect x="58" y="372" width="2" height="4" fill="#ff1010"/>
<rect x="0" y="399" width="4" height="2" fill="#ff1010"/><rect x="1" y="398" width="2" height="4" fill="#ff1010"/>
<rect x="7" y="399" width="4" height="2" fill="#ff1010"/><rect x="8" y="398" width="2" height="4" fill="#ff1010"/>
<rect x="136" y="437" width="4" height="2" fill="#ff1010"/><rect x="137" y="436" width="2" height="4" fill="#ff1010"/>
<rect x="143" y="437" width="4" height="2" fill="#ff1010"/><rect x="144" y="436" width="2" height="4" fill="#ff1010"/>
<rect x="151" y="437" width="4" height="2" fill="#ff1010"/><rect x="152" y="436" width="2" height="4" fill="#ff1010"/>
<rect x="158" y="437" width="4" height="2" fill="#ff1010"/><rect x="159" y="436" width="2" height="4" fill="#ff1010"/>
<rect x="165" y="437" width="4" height="2" fill="#ff1010"/><rect x="166" y="436" width="2" height="4" fill="#ff1010"/>
<rect x="222" y="487" width="4" height="2" fill="#ff1010"/><rect x="223" y="486" width="2" height="4" fill="#ff1010"/>
<rect x="230" y="487" width="4" height="2" fill="#ff1010"/><rect x="231" y="486" width="2" height="4" fill="#ff1010"/>
<rect x="237" y="487" width="4" height="2" fill="#ff1010"/><rect x="238" y="486" width="2" height="4" fill="#ff1010"/>
<rect x="244" y="487" width="4" height="2" fill="#ff1010"/><rect x="245" y="486" width="2" height="4" fill="#ff1010"/>
<rect x="251" y="487" width="4" height="2" fill="#ff1010"/><rect x="252" y="486" width="2" height="4" fill="#ff1010"/>
<rect x="258" y="487" width="4" height="2" fill="#ff1010"/><rect x="259" y="486" width="2" height="4" fill="#ff1010"/>
<rect x="265" y="487" width="4" height="2" fill="#ff1010"/><rect x="266" y="486" width="2" height="4" fill="#ff1010"/>
<rect x="517" y="513" width="4" height="2" fill="#ff1010"/><rect x="518" y="512" width="2" height="4" fill="#ff1010"/>
<rect x="524" y="513" width="4" height="2" fill="#ff1010"/><rect x="525" y="512" width="2" height="4" fill="#ff1010"/>
<rect x="531" y="513" width="4" height="2" fill="#ff1010"/><rect x="532" y="512" width="2" height="4" fill="#ff1010"/>
<rect x="538" y="513" width="4" height="2" fill="#ff1010"/><rect x="539" y="512" width="2" height="4" fill="#ff1010"/>
<rect x="545" y="513" width="4" height="2" fill="#ff1010"/><rect x="546" y="512" width="2" height="4" fill="#ff1010"/>
<rect x="553" y="513" width="4" height="2" fill="#ff1010"/><rect x="554" y="512" width="2" height="4" fill="#ff1010"/>
<rect x="301" y="593" width="4" height="2" fill="#1010ff"/><rect x="302" y="592" width="2" height="4" fill="#1010ff"/>
<rect x="309" y="593" width="4" height="2" fill="#1010ff"/><rect x="310" y="592" width="2" height="4" fill="#1010ff"/>
<rect x="316" y="593" width="4" height="2" fill="#1010ff"/><rect x="317" y="592" width="2" height="4" fill="#1010ff"/>
<rect x="323" y="593" width="4" height="2" fill="#1010ff"/><rect x="324" y="592" width="2" height="4" fill="#1010ff"/>
<rect x="330" y="593" width="4" height="2" fill="#1010ff"/><rect x="331" y="592" width="2" height="4" fill="#1010ff"/>
<rect x="337" y="593" width="4" height="2" fill="#1010ff"/><rect x="338" y="592" width="2" height="4" fill="#1010ff"/>
<rect x="344" y="593" width="4" height="2" fill="#1010ff"/><rect x="345" y="592" width="2" height="4" fill="#1010ff"/>
<rect x="352" y="593" width="4" height="2" fill="#1010ff"/><rect x="353" y="592" width="2" height="4" fill="#1010ff"/>
<rect x="359" y="593" width="4" height="2" fill="#1010ff"/><rect x="360" y="592" width="2" height="4" fill="#1010ff"/>
<rect x="366" y="593" width="4" height="2" fill="#1010ff"/><rect x="367" y="592" width="2" height="4" fill="#1010ff"/>
<rect x="373" y="593" width="4" height="2" fill="#1010ff"/><rect x="374" y="592" width="2" height="4" fill="#1010ff"/>
<rect x="402" y="607" width="4" height="2" fill="#1010ff"/><rect x="403" y="606" width="2" height="4" fill="#1010ff"/>
<rect x="409" y="607" width="4" height="2" fill="#1010ff"/><rect x="410" y="606" width="2" height="4" fill="#1010ff"/>
<rect x="416" y="607" width="4" height="2" fill="#1010ff"/><rect x="417" y="606" width="2" height="4" fill="#1010ff"/>
<rect x="423" y="607" width="4" height="2" fill="#1010ff"/><rect x="424" y="606" width="2" height="4" fill="#1010ff"/>
<rect x="431" y="607" width="4" height="2" fill="#1010ff"/><rect x="432" y="606" width="2" height="4" fill="#1010ff"/>
<rect x="438" y="607" width="4" height="2" fill="#1010ff"/><rect x="439" y="606" width="2" height="4" fill="#1010ff"/>
<rect x="445" y="607" width="4" height="2" fill="#1010ff"/><rect x="446" y="606" width="2" height="4" fill="#1010ff"/>
<rect x="452" y="607" width="4" height="2" fill="#1010ff"/><rect x="453" y="606" width="2" height="4" fill="#1010ff"/>
<rect x="459" y="607" width="4" height="2" fill="#1010ff"/><rect x="460" y="606" width="2" height="4" fill="#1010ff"/>
<rect x="466" y="607" width="4" height="2" fill="#1010ff"/><rect x="467" y="606" width="2" height="4" fill="#1010ff"/>
<rect x="474" y="607" width="4" height="2" fill="#1010ff"/><rect x="475" y="606" width="2" height="4" fill="#1010ff"/>
<rect x="481" y="607" width="4" height="2" fill="#1010ff"/><rect x="482" y="606" width="2" height="4" fill="#1010ff"/>
<rect x="617" y="625" width="4" height="2" fill="#1010ff"/><rect x="618" y="624" width="2" height="4" fill="#1010ff"/>
<rect x="624" y="625" width="4" height="2" fill="#1010ff"/><rect x="625" y="624" width="2" height="4" fill="#1010ff"/>
<rect x="632" y="625" width="4" height="2" fill="#1010ff"/><rect x="633" y="624" width="2" height="4" fill="#1010ff"/>
<rect x="639" y="625" width="4" height="2" fill="#1010ff"/><rect x="640" y="624" width="2" height="4" fill="#1010ff"/>
<rect x="646" y="625" width="4" height="2" fill="#1010ff"/><rect x="647" y="624" width="2" height="4" fill="#1010ff"/>
<rect x="667" y="665" width="4" height="2" fill="#0c0c3a"/>
<rect x="675" y="665" width="4" height="2" fill="#0c0c3a"/>
<rect x="682" y="665" width="4" height="2" fill="#0c0c3a"/>
<rect x="689" y="665" width="4" height="2" fill="#0c0c3a"/>
<rect x="696" y="665" width="4" height="2" fill="#0c0c3a"/>
<rect x="703" y="665" width="4" height="2" fill="#0c0c3a"/>
<rect x="711" y="665" width="4" height="2" fill="#0c0c3a"/>
<rect x="718" y="665" width="4" height="2" fill="#0c0c3a"/>
<rect x="725" y="665" width="4" height="2" fill="#0c0c3a"/>
<rect x="732" y="665" width="4" height="2" fill="#0c0c3a"/>
<rect x="739" y="665" width="4" height="2" fill="#0c0c3a"/>
<rect x="746" y="665" width="4" height="2" fill="#0c0c3a"/>
<rect x="972" y="195" width="2" height="1" fill="#303030"/>
<rect x="972" y="202" width="4" height="1" fill="#303030"/>
<rect x="972" y="209" width="2" height="1" fill="#303030"/>
<rect x="972" y="216" width="2" height="1" fill="#303030"/>
<rect x="972" y="223" width="2" height="1" fill="#303030"/>
<rect x="972" y="230" width="4" height="1" fill="#303030"/>
<rect x="972" y="237" width="2" height="1" fill="#303030"/>
<rect x="972" y="244" width="2" height="1" fill="#303030"/>
<rect x="972" y="251" width="2" height="1" fill="#303030"/>
<rect x="972" y="258" width="4" height="1" fill="#303030"/>
<rect x="972" y="265" width="2" height="1" fill="#303030"/>
<rect x="972" y="272" width="2" height="1" fill="#303030"/>
<rect x="972" y="279" width="2" height="1" fill="#303030"/>
<rect x="972" y="286" width="4" height="1" fill="#303030"/>
<rect x="972" y="293" width="2" height="1" fill="#303030"/>
<rect x="972" y="300" width="2" height="1" fill="#303030"/>
<rect x="972" y="307" width="2" height="1" fill="#303030"/>
<rect x="972" y="314" width="4" height="1" fill="#303030"/>
<rect x="972" y="321" width="2" height="1" fill="#303030"/>
<rect x="972" y="328" width="2" height="1" fill="#303030"/>
<rect x="972" y="335" width="2" height="1" fill="#303030"/>
<rect x="972" y="342" width="4" height="1" fill="#303030"/>
<rect x="972" y="349" width="2" height="1" fill="#303030"/>
<rect x="972" y="356" width="2" height="1" fill="#303030"/>
<rect x="972" y="363" width="2" height="1" fill="#303030"/>
<rect x="972" y="370" width="4" height="1" fill="#303030"/>
<rect x="972" y="377" width="2" height="1" fill="#303030"/>
<rect x="972" y="384" width="2" height="1" fill="#303030"/>
<rect x="972" y="391" width="2" height="1" fill="#303030"/>
<rect x="972" y="398" width="4" height="1" fill="#303030"/>
<rect x="972" y="405" width="2" height="1" fill="#303030"/>
<rect x="972" y="412" width="2" height="1" fill="#303030"/>
<rect x="972" y="419" width="2" height="1" fill="#303030"/>
<rect x="972" y="426" width="4" height="1" fill="#303030"/>
<rect x="972" y="433" width="2" height="1" fill="#303030"/>
<rect x="972" y="440" width="2" height="1" fill="#303030"/>
<rect x="972" y="447" width="2" height="1" fill="#303030"/>
<rect x="972" y="454" width="4" height="1" fill="#303030"/>
<rect x="972" y="461" width="2" height="1" fill="#303030"/>
<rect x="972" y="468" width="2" height="1" fill="#303030"/>
<rect x="972" y="475" width="2" height="1" fill="#303030"/>
<rect x="972" y="482" width="4" height="1" fill="#303030"/>
<rect x="972" y="489" width="2" height="1" fill="#303030"/>
<rect x="972" y="496" width="2" height="1" fill="#303030"/>
<rect x="972" y="503" width="2" height="1" fill="#303030"/>
<rect x="972" y="510" width="4" height="1" fill="#303030"/>
<rect x="972" y="517" width="2" height="1" fill="#303030"/>
<rect x="972" y="524" width="2" height="1" fill="#303030"/>
<rect x="972" y="531" width="2" height="1" fill="#303030"/>
<rect x="972" y="538" width="4" height="1" fill="#303030"/>
<rect x="972" y="545" width="2" height="1" fill="#303030"/>
<rect x="972" y="552" width="2" height="1" fill="#303030"/>
<rect x="972" y="559" width="2" height="1" fill="#303030"/>
<rect x="972" y="566" width="4" height="1" fill="#303030"/>
<rect x="972" y="573" width="2" height="1" fill="#303030"/>
<rect x="972" y="580" width="2" height="1" fill="#303030"/>
<rect x="972" y="587" width="2" height="1" fill="#303030"/>
<rect x="972" y="594" width="4" height="1" fill="#303030"/>
<rect x="972" y="601" width="2" height="1" fill="#303030"/>
<rect x="972" y="608" width="2" height="1" fill="#303030"/>
<rect x="972" y="615" width="2" height="1" fill="#303030"/>
<rect x="972" y="622" width="4" height="1" fill="#303030"/>
<rect x="972" y="629" width="2" height="1" fill="#303030"/>
<rect x="2" y="668" width="1" height="4" fill="#000"/>
<rect x="18" y="668" width="1" height="2" fill="#000"/>
<rect x="34" y="668" width="1" height="2" fill="#000"/>
<rect x="50" y="668" width="1" height="2" fill="#000"/>
<rect x="67" y="668" width="1" height="4" fill="#000"/>
<rect x="83" y="668" width="1" height="2" fill="#000"/>
<rect x="99" y="668" width="1" height="2" fill="#000"/>
<rect x="115" y="668" width="1" height="2" fill="#000"/>
<rect x="131" y="668" width="1" height="4" fill="#000"/>
<rect x="147" y="668" width="1" height="2" fill="#000"/>
<rect x="163" y="668" width="1" height="2" fill="#000"/>
<rect x="180" y="668" width="1" height="2" fill="#000"/>
<rect x="196" y="668" width="1" height="4" fill="#000"/>
<rect x="212" y="668" width="1" height="2" fill="#000"/>
<rect x="228" y="668" width="1" height="2" fill="#000"/>
<rect x="244" y="668" width="1" height="2" fill="#000"/>
<rect x="260" y="668" width="1" height="4" fill="#000"/>
<rect x="276" y="668" width="1" height="2" fill="#000"/>
<rect x="293" y="668" width="1" height="2" fill="#000"/>
<rect x="309" y="668" width="1" height="2" fill="#000"/>
<rect x="325" y="668" width="1" height="4" fill="#000"/>
<rect x="341" y="668" width="1" height="2" fill="#000"/>
<rect x="357" y="668" width="1" height="2" fill="#000"/>
<rect x="373" y="668" width="1" height="2" fill="#000"/>
<rect x="390" y="668" width="1" height="4" fill="#000"/>
<rect x="406" y="668" width="1" height="2" fill="#000"/>
<rect x="422" y="668" width="1" height="2" fill="#000"/>
<rect x="438" y="668" width="1" height="2" fill="#000"/>
<rect x="454" y="668" width="1" height="4" fill="#000"/>
<rect x="470" y="668" width="1" height="2" fill="#000"/>
<rect x="486" y="668" width="1" height="2" fill="#000"/>
<rect x="503" y="668" width="1" height="2" fill="#000"/>
<rect x="519" y="668" width="1" height="4" fill="#000"/>
<rect x="535" y="668" width="1" height="2" fill="#000"/>
<rect x="551" y="668" width="1" height="2" fill="#000"/>
<rect x="567" y="668" width="1" height="2" fill="#000"/>
<rect x="583" y="668" width="1" height="4" fill="#000"/>
<rect x="599" y="668" width="1" height="2" fill="#000"/>
<rect x="616" y="668" width="1" height="2" fill="#000"/>
<rect x="632" y="668" width="1" height="2" fill="#000"/>
<rect x="648" y="668" width="1" height="4" fill="#000"/>
<rect x="664" y="668" width="1" height="2" fill="#000"/>
<rect x="680" y="668" width="1" height="2" fill="#000"/>
<rect x="696" y="668" width="1" height="2" fill="#000"/>
<rect x="713" y="668" width="1" height="4" fill="#000"/>
<rect x="729" y="668" width="1" height="2" fill="#000"/>
<rect x="745" y="668" width="1" height="2" fill="#000"/>
<rect x="761" y="668" width="1" height="2" fill="#000"/>
<rect x="777" y="668" width="1" height="4" fill="#000"/>
<rect x="793" y="668" width="1" height="2" fill="#000"/>
<rect x="809" y="668" width="1" height="2" fill="#000"/>
<rect x="826" y="668" width="1" height="2" fill="#000"/>
<rect x="842" y="668" width="1" height="4" fill="#000"/>
<rect x="858" y="668" width="1" height="2" fill="#000"/>
<rect x="874" y="668" width="1" height="2" fill="#000"/>
<rect x="890" y="668" width="1" height="2" fill="#000"/>
<rect x="906" y="668" width="1" height="4" fill="#000"/>
<rect x="922" y="668" width="1" height="2" fill="#000"/>
<rect x="939" y="668" width="1" height="2" fill="#000"/>
<rect x="955" y="668" width="1" height="2" fill="#000"/>
</svg>
<div class="a" style="left:0;top:157px;width:2px;height:511px;background:#edeaed"></div>
<div class="t" style="left:977px;top:195px">1.184</div>
<div class="t" style="left:977px;top:223px">1.183,5</div>
<div class="t" style="left:977px;top:251px">1.183</div>
<div class="t" style="left:977px;top:279px">1.182,5</div>
<div class="t" style="left:977px;top:307px">1.182</div>
<div class="t" style="left:977px;top:335px">1.181,5</div>
<div class="t" style="left:977px;top:363px">1.181</div>
<div class="t" style="left:977px;top:391px">1.180,5</div>
<div class="t" style="left:977px;top:419px">1.180</div>
<div class="t" style="left:977px;top:447px">1.179,5</div>
<div class="t" style="left:977px;top:475px">1.179</div>
<div class="t" style="left:977px;top:503px">1.178,5</div>
<div class="t" style="left:977px;top:531px">1.178</div>
<div class="t" style="left:977px;top:559px">1.177,5</div>
<div class="t" style="left:977px;top:587px">1.177</div>
<div class="t" style="left:977px;top:615px">1.176,5</div>
<div class="t tc" style="left:-38px;top:674px">16:33<br>22/10/2010</div>
<div class="t tc" style="left:27px;top:674px">17:00<br>22/10/2010</div>
<div class="t tc" style="left:91px;top:674px">17:27<br>22/10/2010</div>
<div class="t tc" style="left:156px;top:674px">17:54<br>22/10/2010</div>
<div class="t tc" style="left:220px;top:674px">18:21<br>22/10/2010</div>
<div class="t tc" style="left:285px;top:674px">18:48<br>22/10/2010</div>
<div class="t tc" style="left:350px;top:674px">19:15<br>22/10/2010</div>
<div class="t tc" style="left:414px;top:674px">19:42<br>22/10/2010</div>
<div class="t tc" style="left:479px;top:674px">20:09<br>22/10/2010</div>
<div class="t tc" style="left:543px;top:674px">20:36<br>22/10/2010</div>
<div class="t tc" style="left:608px;top:674px">21:03<br>22/10/2010</div>
<div class="t tc" style="left:673px;top:674px">21:30<br>22/10/2010</div>
<div class="t tc" style="left:737px;top:674px">21:57<br>22/10/2010</div>
<div class="t tc" style="left:802px;top:674px">22:27<br>22/10/2010</div>
<div class="t tc" style="left:866px;top:674px">22:54<br>22/10/2010</div>
<div class="t" style="left:1006px;top:405px;transform:rotate(90deg);transform-origin:0 0;left:1021px;top:399px">Price</div>

<!-- INFO BOX -->
<div class="ib">22/10/2010<br>T = 22:18<br>O = 118075<br>H = 118075<br>L = 118075<br>C = 118075<br>&nbsp;&nbsp;&nbsp; -50<br><br>&nbsp;TCI System<br>Date=22/10/2010<br>Entry = 117842<br>SAR=None<br>Eq=2.320,50 €<br>PT Eq=-1.680,50 €</div>

<!-- SCROLLBAR -->
<div class="a" style="left:0;top:705px;width:1024px;height:16px;background:#f1eff1"></div>
<div class="a" style="left:0;top:705px;width:17px;height:16px;background:#eeebee;border-left:1px solid #fff;border-top:1px solid #fff;border-right:1px solid #202020;border-bottom:1px solid #202020"></div>
<svg class="a" style="left:5px;top:709px" width="5" height="8"><path d="M5 0 V8 L0 4Z" fill="#000"/></svg>
<div class="a" style="left:990px;top:705px;width:17px;height:16px;background:#e6e4e6;border-bottom:1px solid #202020"></div>
<div class="a" style="left:1006px;top:705px;width:18px;height:16px;background:#eeebee;border-left:1px solid #202020;border-top:1px solid #fff;border-right:1px solid #202020;border-bottom:1px solid #202020"></div>
<svg class="a" style="left:1012px;top:709px" width="5" height="8"><path d="M0 0 V8 L5 4Z" fill="#000"/></svg>

<!-- STATUS BAR -->
<div class="a" style="left:0;top:721px;width:1024px;height:16px;background:#edeaed"></div>
<div class="a" style="left:0;top:723px;width:75px;height:14px;border-top:1px solid #9a9a9a;border-right:1px solid #fff"></div>
<div class="a" style="left:77px;top:723px;width:947px;height:14px;border-top:1px solid #9a9a9a;border-left:1px solid #9a9a9a"></div>
<div class="t" style="left:2px;top:723px">OK</div>
</body></html>
